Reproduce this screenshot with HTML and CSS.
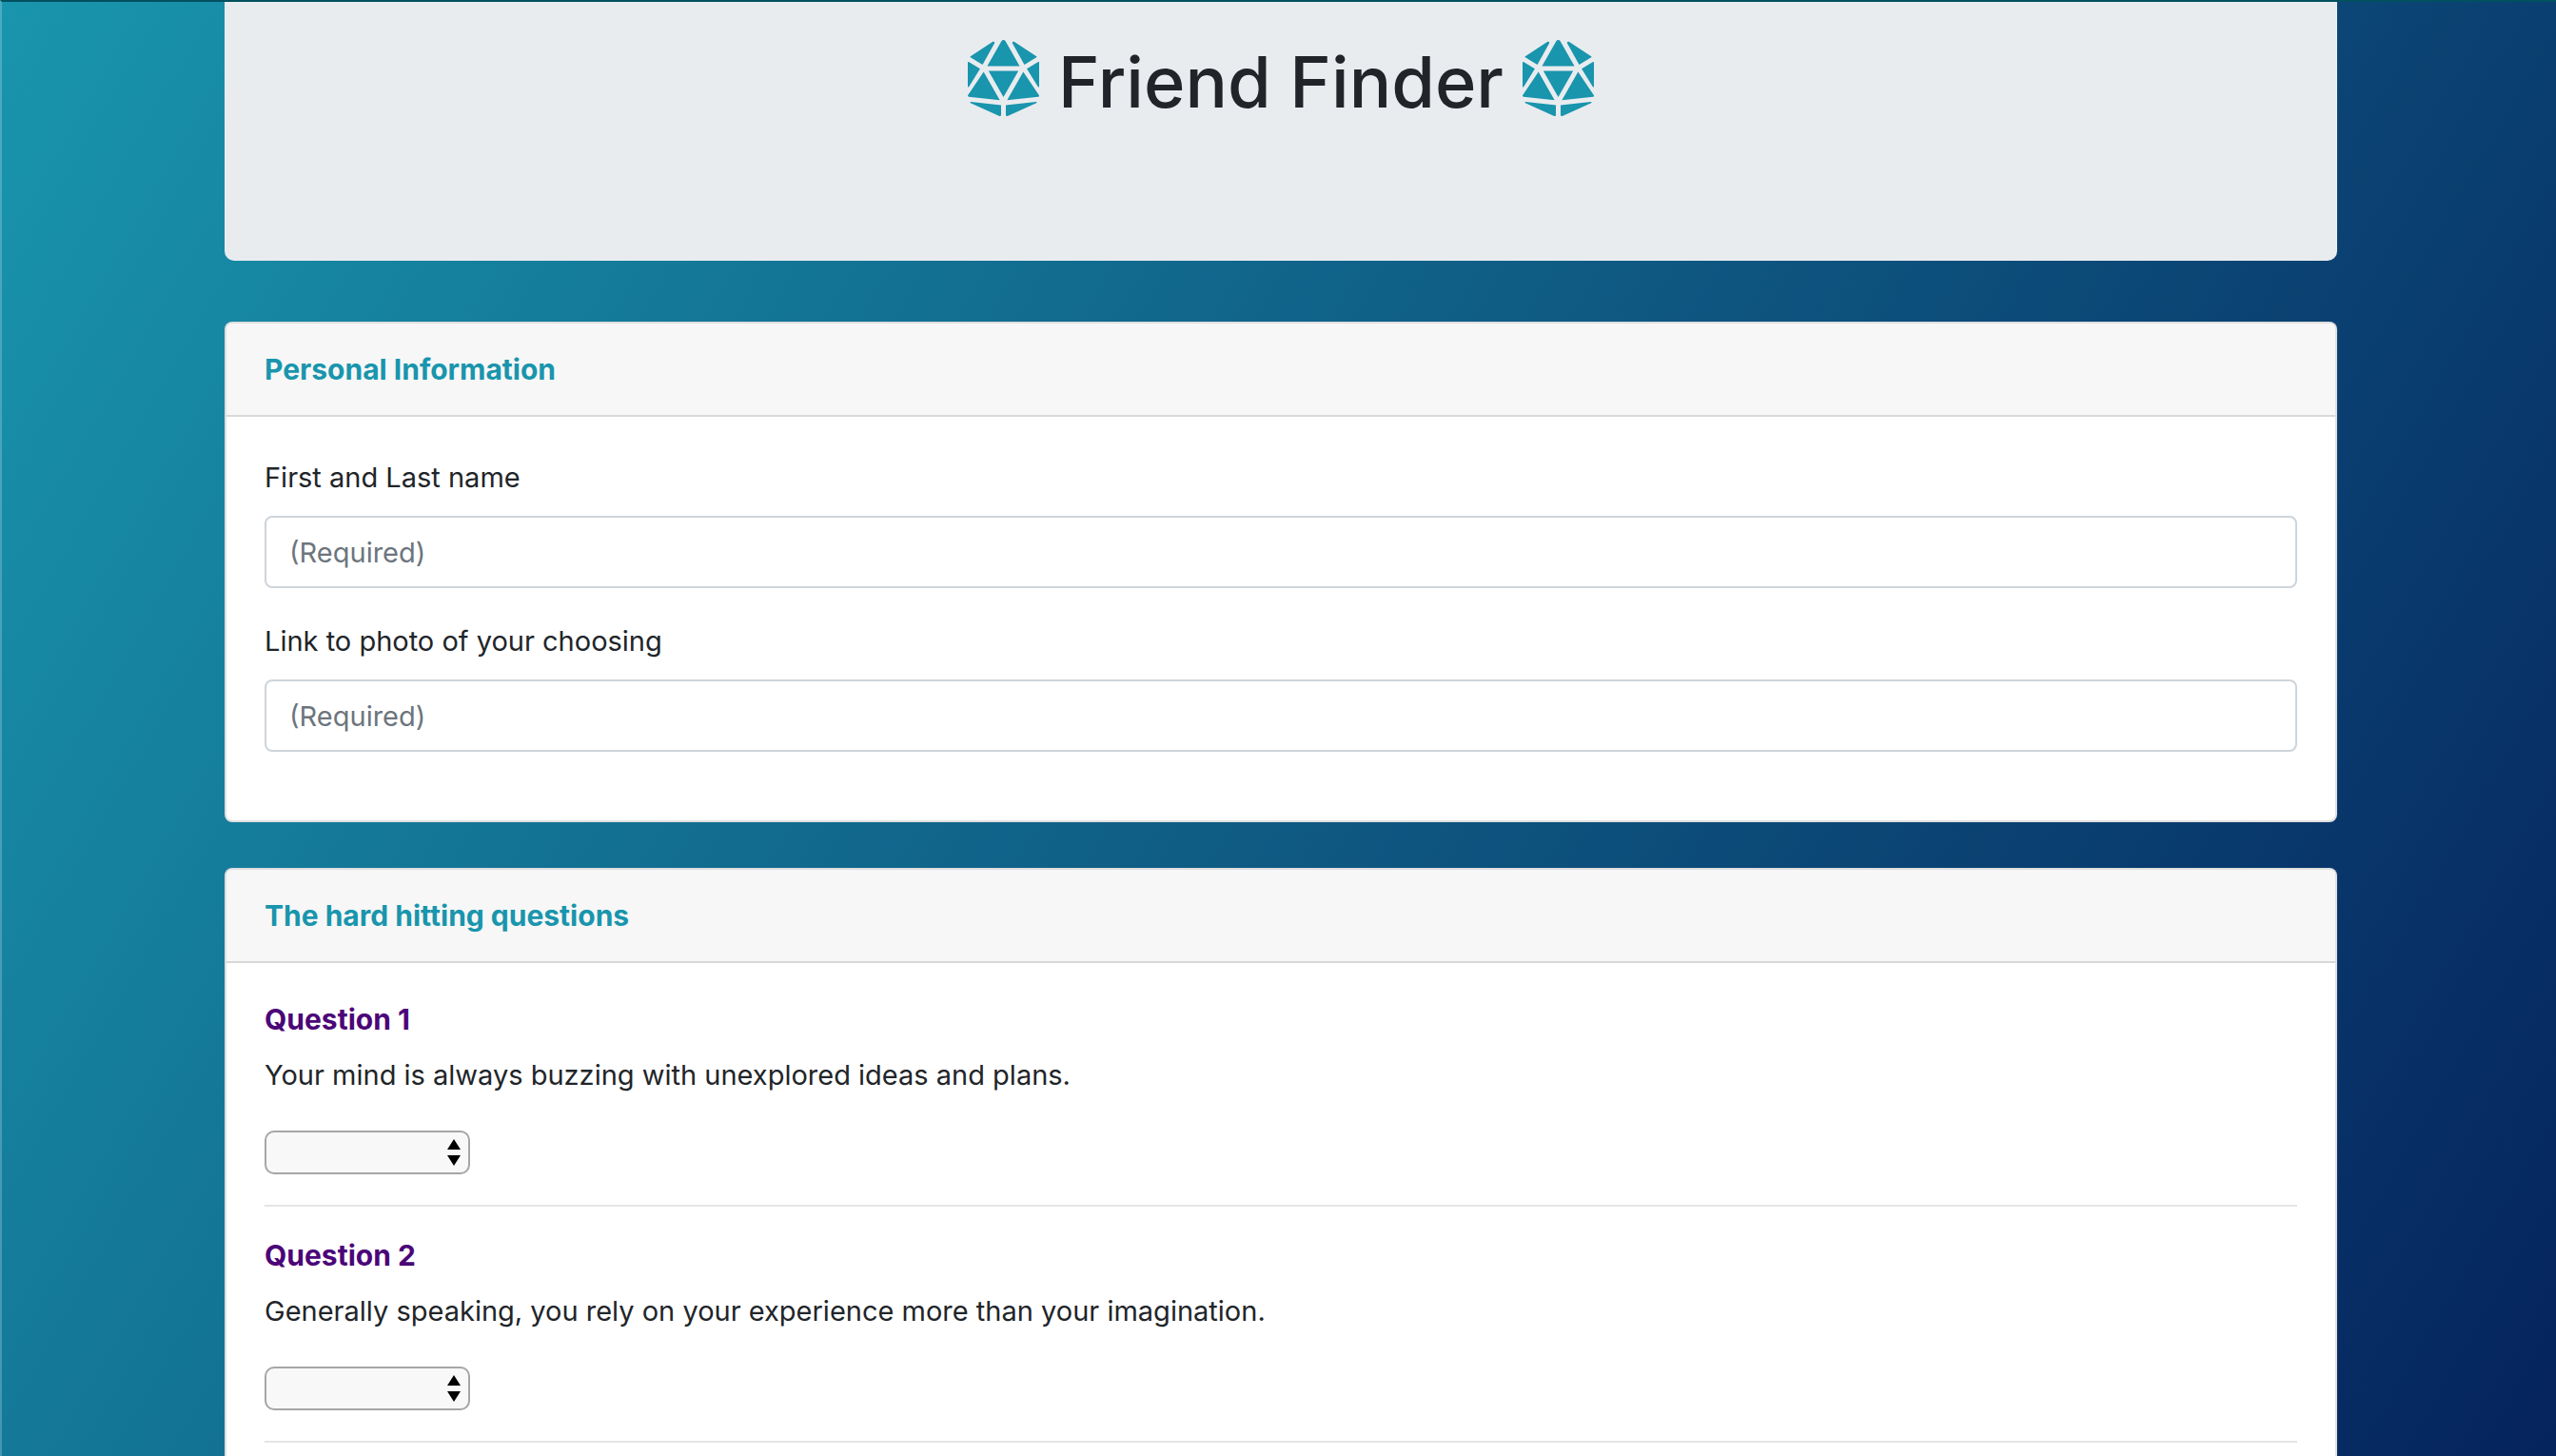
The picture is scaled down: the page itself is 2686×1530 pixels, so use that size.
FILE: index.html
```html
<!DOCTYPE html>
<html lang="en">
<head>
<meta charset="utf-8">
<meta name="viewport" content="width=device-width, initial-scale=1">
<title>Friend Finder</title>
<link rel="stylesheet" href="styles.css">
</head>
<body>
<svg class="sprite" aria-hidden="true">
  <symbol id="dice" viewBox="0 0 480 512">
    <path d="M106.75 215.06L1.2 370.95c-3.08 5 .1 11.5 5.93 12.14l208.26 22.07-108.64-190.1zM7.41 315.43L82.7 193.08 6.06 147.1c-2.67-1.62-6.06.3-6.06 3.42v162.81c0 4.03 5.29 5.53 7.41 2.1zM18.25 423.6l194.4 87.66c5.3 2.45 11.35-1.43 11.35-7.26v-65.67l-203.55-22.3c-4.45-.5-6.23 5.59-2.2 7.57zm81.22-257.78L179.4 22.88c4.34-7.06-3.59-15.25-10.78-11.14L17.81 110.35c-2.47 1.62-2.39 5.26.13 6.78l81.53 48.69zM240 176h109.21L253.63 7.62C250.5 2.54 245.25 0 240 0s-10.5 2.54-13.63 7.62L130.79 176H240zm233.94-28.9l-76.64 45.99 75.29 122.35c2.11 3.44 7.41 1.94 7.41-2.1V150.52c0-3.11-3.39-5.03-6.06-3.42zm-93.41 18.72l81.53-48.7c2.53-1.52 2.6-5.16.13-6.78l-150.81-98.6c-7.19-4.11-15.12 4.08-10.78 11.14l79.93 142.94zm79.02 250.21L256 438.32v65.67c0 5.84 6.05 9.71 11.35 7.26l194.4-87.66c4.03-1.97 2.25-8.06-2.2-7.56zm-86.3-200.97l-108.63 190.1 208.26-22.07c5.83-.65 9.01-7.14 5.93-12.14L373.25 215.06zM240 208H139.57L240 383.75 340.43 208H240z"/>
  </symbol>
</svg>
<div class="container">
  <header class="banner">
    <svg class="dice" aria-hidden="true"><use href="#dice"/></svg>
    <h1 class="title">Friend Finder</h1>
    <svg class="dice" aria-hidden="true"><use href="#dice"/></svg>
  </header>

  <form class="survey">
    <section class="card">
      <h2 class="card-header">Personal Information</h2>
      <div class="card-body">
        <div class="field">
          <label for="name">First and Last name</label>
          <input id="name" type="text" placeholder="(Required)">
        </div>
        <div class="field">
          <label for="photo">Link to photo of your choosing</label>
          <input id="photo" type="text" placeholder="(Required)">
        </div>
      </div>
    </section>

    <section class="card card-open">
      <h2 class="card-header">The hard hitting questions</h2>
      <div class="card-body">
        <div class="question">
          <h3 class="question-title">Question 1</h3>
          <label class="question-text" for="q1">Your mind is always buzzing with unexplored ideas and plans.</label>
          <select id="q1" class="answer"><option></option><option>1</option><option>2</option><option>3</option><option>4</option><option>5</option></select>
        </div>
        <div class="question">
          <h3 class="question-title">Question 2</h3>
          <label class="question-text" for="q2">Generally speaking, you rely on your experience more than your imagination.</label>
          <select id="q2" class="answer"><option></option><option>1</option><option>2</option><option>3</option><option>4</option><option>5</option></select>
        </div>
      </div>
    </section>
  </form>
</div>
</body>
</html>
```
FILE: styles.css
```css
*, *::before, *::after { box-sizing: border-box; }

html {
  background: linear-gradient(120deg, #1995ad, #05235d) fixed;
}

body {
  display: flex;
  flex-direction: column;
  min-height: 100vh;
  margin: 0;
  padding: 0 0 0 4px;
  border-top: 2px solid #00505f;
  border-left: 2px solid rgba(255, 255, 255, 0.22);
  font: 400 29px/48px Inter, "Liberation Sans", sans-serif;
  color: #212529;
}

h1, h2, h3 { margin: 0; }

.sprite { display: none; }

.container {
  display: flex;
  flex: 1;
  flex-direction: column;
  width: 100%;
  max-width: 2220px;
  margin: 0 auto;
}

.banner {
  display: flex;
  align-items: center;
  justify-content: center;
  gap: 20px;
  margin-bottom: 64px;
  padding: 32px 32px 144px;
  border-radius: 0 0 10px 10px;
  background: #e9ecef;
}

.title {
  padding-top: 8px;
  font-size: 74px;
  font-weight: 500;
  line-height: 88px;
}

.dice {
  width: 75px;
  height: 80px;
  fill: #1995ad;
}

.survey {
  display: flex;
  flex: 1;
  flex-direction: column;
  gap: 48px;
}

.card {
  border: 2px solid rgba(0, 0, 0, 0.125);
  border-radius: 8px;
  background: #fff;
}

.card-open {
  flex: 1;
  border-bottom: 0;
  border-radius: 8px 8px 0 0;
}

.card-header {
  padding: 24px 40px;
  border-bottom: 2px solid #d8d8d8;
  border-radius: 6px 6px 0 0;
  background: #f7f7f7;
  font-size: 30px;
  font-weight: 700;
  line-height: 48px;
  color: #1995ad;
}

.card-body { padding: 40px; }
.card-open .card-body { padding-bottom: 0; }

.field {
  display: flex;
  flex-direction: column;
  gap: 16px;
  margin-bottom: 32px;
}

.field input {
  width: 100%;
  height: 76px;
  padding: 12px 24px;
  border: 2px solid #ced4da;
  border-radius: 8px;
  background: #fff;
  font: inherit;
  color: #495057;
}

.field input::placeholder { color: #6c757d; opacity: 1; }

.question { border-bottom: 2px solid #e5e5e5; }
.question + .question { margin-top: 32px; }

.question-title {
  margin-bottom: 16px;
  font-size: 30px;
  font-weight: 700;
  line-height: 38px;
  color: #4b0678;
}

.question-text { display: block; }

.answer {
  display: block;
  width: 216px;
  height: 46px;
  margin: 34px 0 32px;
  padding: 0 32px 0 12px;
  border: 2px solid #a6a6a6;
  border-radius: 10px;
  appearance: none;
  background: #f8f8f8 url("data:image/svg+xml,%3Csvg xmlns='http://www.w3.org/2000/svg' width='14' height='28'%3E%3Cpath d='M0 11L7 0l7 11zM0 17h14L7 28z'/%3E%3C/svg%3E") no-repeat right 8px center;
  font: inherit;
}
```
